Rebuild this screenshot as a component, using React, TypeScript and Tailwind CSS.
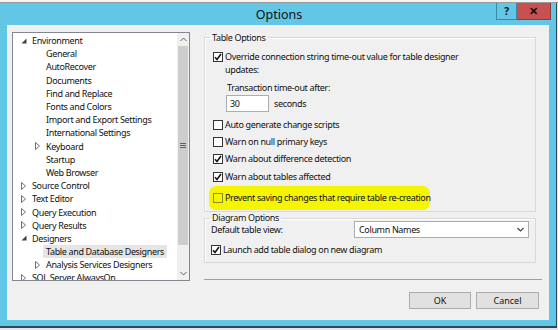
import { useState } from 'react';

type TreeItem = {
	label: string;
	level: number;
	arrow?: 'open' | 'closed';
	selected?: boolean;
};

const treeItems: TreeItem[] = [
	{ label: 'Environment', level: 0, arrow: 'open' },
	{ label: 'General', level: 1 },
	{ label: 'AutoRecover', level: 1 },
	{ label: 'Documents', level: 1 },
	{ label: 'Find and Replace', level: 1 },
	{ label: 'Fonts and Colors', level: 1 },
	{ label: 'Import and Export Settings', level: 1 },
	{ label: 'International Settings', level: 1 },
	{ label: 'Keyboard', level: 1, arrow: 'closed' },
	{ label: 'Startup', level: 1 },
	{ label: 'Web Browser', level: 1 },
	{ label: 'Source Control', level: 0, arrow: 'closed' },
	{ label: 'Text Editor', level: 0, arrow: 'closed' },
	{ label: 'Query Execution', level: 0, arrow: 'closed' },
	{ label: 'Query Results', level: 0, arrow: 'closed' },
	{ label: 'Designers', level: 0, arrow: 'open' },
	{ label: 'Table and Database Designers', level: 1, selected: true },
	{ label: 'Analysis Services Designers', level: 1, arrow: 'closed' },
	{ label: 'SOL Server AlwaysOn', level: 0, arrow: 'closed' },
];

function TreeArrow({ kind }: { kind: 'open' | 'closed' }) {
	if (kind === 'open') {
		return (
			<svg width="6" height="6" viewBox="0 0 6 6">
				<path d="M5.5 0.5 L5.5 5.5 L0.5 5.5 Z" fill="#404040" />
			</svg>
		);
	}
	return (
		<svg width="5" height="8" viewBox="0 0 5 8">
			<path d="M0.5 0.5 L4.5 4 L0.5 7.5 Z" fill="none" stroke="#707070" strokeWidth="1" />
		</svg>
	);
}

function TreeRow({ item }: { item: TreeItem }) {
	const indent = item.level === 0 ? 'pl-[8px]' : 'pl-[22px]';
	return (
		<div className={`flex h-[13.2px] items-center whitespace-nowrap ${indent}`}>
			<span className="flex w-[11px] shrink-0 items-center justify-start">
				{item.arrow && <TreeArrow kind={item.arrow} />}
			</span>
			<span
				className={
					item.selected
						? '-ml-[3px] bg-[#e5e5e5] px-[3px] leading-[13px]'
						: 'leading-[13px]'
				}
			>
				{item.label}
			</span>
		</div>
	);
}

function Check({ checked }: { checked: boolean }) {
	return (
		<span className="flex h-[10px] w-[10px] shrink-0 items-center justify-center border border-[#333333] bg-white">
			{checked && (
				<svg width="8" height="8" viewBox="0 0 8 8">
					<path d="M1 4.2 L3 6.5 L7 1" fill="none" stroke="#151515" strokeWidth="1.6" />
				</svg>
			)}
		</span>
	);
}

function CheckRow({ checked, label }: { checked: boolean; label: string }) {
	return (
		<label className="flex h-[17.3px] items-center gap-[2px] whitespace-nowrap">
			<Check checked={checked} />
			<span>{label}</span>
		</label>
	);
}

export default function App() {
	const [view] = useState('Column Names');

	return (
		<div className="h-[330px] w-[558px] overflow-hidden bg-[#e6e6e6] font-['Noto_Sans',sans-serif] text-[9px] tracking-[-0.35px] text-[#111]">
			<div className="h-[3px] border-b border-[#9a9a9a] bg-[#f4f4f4]" />
			<div className="flex h-[325px] w-[557px] flex-col border-b-2 border-r border-[#2c4a56] bg-[#62c6e6]">
				{/* title bar */}
				<div className="relative flex h-[22px] shrink-0 items-start">
					<div className="flex h-[19px] flex-1 items-center justify-center pl-[2px] pt-[5px] text-[12.5px] tracking-normal text-[#111]">
						Options
					</div>
					<div className="absolute right-[5px] top-0 flex h-[17px]">
						<button className="flex w-[21px] items-center justify-center border border-t-0 border-[#3a8aa5] bg-[#62c6e6] text-[10px] font-bold text-[#111]">
							?
						</button>
						<button className="flex w-[34px] items-center justify-center border border-l-0 border-t-0 border-[#8e3b3b] bg-[#c75050] text-[11px] font-bold text-[#111]">
							✕
						</button>
					</div>
				</div>

				{/* client */}
				<div className="mx-[7px] flex h-[295px] shrink-0 flex-col bg-[#f0f0f0]">
					<div className="flex h-[256px] gap-[14px] pl-[5px] pt-[6px]">
						{/* tree */}
						<div className="mt-[1px] flex h-[249px] w-[178px] border border-[#828790] bg-white">
							<div className="flex-1 overflow-hidden pt-[1px]">
								{treeItems.map((item) => (
									<TreeRow key={item.label} item={item} />
								))}
							</div>
							<div className="flex w-[12px] flex-col items-center bg-[#f0f0f0]">
								<div className="flex h-[13px] items-center justify-center">
									<svg width="7" height="5" viewBox="0 0 7 5">
										<path d="M0.5 4 L3.5 1 L6.5 4" fill="none" stroke="#606060" strokeWidth="1" />
									</svg>
								</div>
								<div className="flex h-[199px] w-[10px] items-center justify-center bg-[#cdcdcd]">
									<svg width="6" height="5" viewBox="0 0 6 5">
										<path d="M0 0.5 H6 M0 2.5 H6 M0 4.5 H6" stroke="#606060" strokeWidth="1" />
									</svg>
								</div>
								<div className="flex-1" />
								<div className="flex h-[13px] items-center justify-center">
									<svg width="7" height="5" viewBox="0 0 7 5">
										<path d="M0.5 1 L3.5 4 L6.5 1" fill="none" stroke="#606060" strokeWidth="1" />
									</svg>
								</div>
							</div>
						</div>

						{/* options */}
						<div className="flex h-[250px] w-[338px] flex-col">
							<fieldset className="mr-[6px] h-[181px] shrink-0 border border-[#d8d8d8] px-[8px] shadow-[inset_1px_1px_0_#ffffff]">
								<legend className="-ml-[3px] px-[2px] leading-[13px]">Table Options</legend>
								<div className="mt-[6px] flex gap-[2px]">
									<div className="pt-[2px]">
										<Check checked />
									</div>
									<div className="whitespace-nowrap leading-[13px]">
										Override connection string time-out value for table designer
										<br />
										updates:
									</div>
								</div>
								<div className="mt-[5px] pl-[14px] leading-[13px]">Transaction time-out after:</div>
								<div className="mt-[1px] flex items-center gap-[5px] pl-[13px]">
									<div className="flex h-[17px] w-[43px] items-center border border-[#abadb3] bg-white pl-[3px]">
										30
									</div>
									<span>seconds</span>
								</div>
								<div className="mt-[4px]">
									<CheckRow checked={false} label="Auto generate change scripts" />
									<CheckRow checked={false} label="Warn on null primary keys" />
									<CheckRow checked label="Warn about difference detection" />
									<CheckRow checked label="Warn about tables affected" />
								</div>
								<div className="-ml-[4px] mt-[1px] flex h-[24px] w-[221px] items-center gap-[2px] whitespace-nowrap rounded-[7px] bg-[#f5f500] pl-[4px]">
									<span className="flex h-[10px] w-[10px] shrink-0 border border-[#8a8a30] bg-[#f5f500]" />
									<span>Prevent saving changes that require table re-creation</span>
								</div>
							</fieldset>
							<fieldset className="mr-[6px] h-[51px] shrink-0 border border-[#d8d8d8] px-[6px] shadow-[inset_1px_1px_0_#ffffff]">
								<legend className="-ml-[1px] px-[2px] leading-[12px]">Diagram Options</legend>
								<div className="-mt-[3px] flex items-center justify-between">
									<span>Default table view:</span>
									<div className="flex h-[17px] w-[175px] items-center justify-between border border-[#abadb3] bg-white px-[4px]">
										<span>{view}</span>
										<svg width="7" height="5" viewBox="0 0 7 5">
											<path d="M0.5 1 L3.5 4 L6.5 1" fill="none" stroke="#404040" strokeWidth="1.2" />
										</svg>
									</div>
								</div>
								<div className="mt-[3px]">
									<CheckRow checked label="Launch add table dialog on new diagram" />
								</div>
							</fieldset>
							<div className="mt-auto mb-[1px] h-px bg-[#a0a0a0]" />
						</div>
					</div>

					<div className="mr-[10px] mt-[11px] flex justify-end gap-[5px] tracking-normal">
						<button className="h-[17px] w-[62px] border border-[#adadad] bg-[#e1e1e1]">OK</button>
						<button className="h-[17px] w-[63px] border border-[#adadad] bg-[#e1e1e1]">Cancel</button>
					</div>
				</div>
			</div>
		</div>
	);
}
